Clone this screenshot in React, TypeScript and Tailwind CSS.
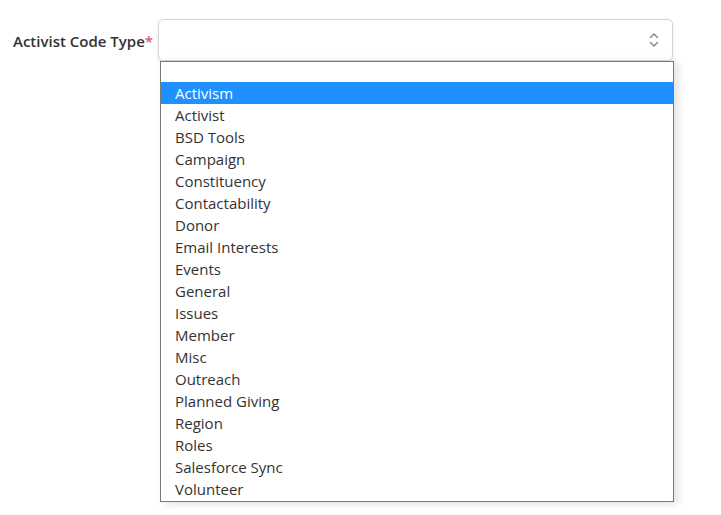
const OPTIONS = [
  "Activism",
  "Activist",
  "BSD Tools",
  "Campaign",
  "Constituency",
  "Contactability",
  "Donor",
  "Email Interests",
  "Events",
  "General",
  "Issues",
  "Member",
  "Misc",
  "Outreach",
  "Planned Giving",
  "Region",
  "Roles",
  "Salesforce Sync",
  "Volunteer",
]

function UpDown() {
  return (
    <svg width="10" height="16" viewBox="0 0 10 16" fill="none" stroke="#7a7a7a" strokeWidth="1.2" strokeLinecap="round" strokeLinejoin="round">
      <path d="M1.5 5.5 L5 2 L8.5 5.5" />
      <path d="M1.5 10.5 L5 14 L8.5 10.5" />
    </svg>
  )
}

export default function App() {
  const selected = "Activism"
  return (
    <div className="w-[721px] h-[515px] bg-white text-[#333] overflow-hidden" style={{ fontFamily: '"Open Sans", "Noto Sans", sans-serif' }}>
      <div className="flex items-center pt-[19px] pl-[13px]">
        <label className="w-[145px] pt-[2px] text-[15px] font-semibold text-[#333] leading-none tracking-[0px] whitespace-nowrap">
          Activist Code Type<span className="text-[#e0595a]">*</span>
        </label>
        <div className="relative">
          <div className="w-[515px] h-[42px] rounded-[5px] border border-[#d4d4d4] bg-white shadow-[0_2px_4px_rgba(0,0,0,0.08)] flex items-center justify-end pr-[13px]">
            <UpDown />
          </div>

          {/* open list */}
          <div className="absolute left-[2px] top-[42px] w-[514px] h-[441px] border border-[#7a7a7a] bg-white shadow-[4px_2px_8px_rgba(0,0,0,0.12)]">
            <div className="h-[20px]" />
            <ul>
              {OPTIONS.map((o) => (
                <li
                  key={o}
                  className={
                    o === selected
                      ? "h-[22px] flex items-center pl-[14px] pt-[1px] text-[15px] bg-[#1e90ff] text-white"
                      : "h-[22px] flex items-center pl-[14px] pt-[1px] text-[15px] text-[#333]"
                  }
                >
                  {o}
                </li>
              ))}
            </ul>
          </div>
        </div>
      </div>
    </div>
  )
}
